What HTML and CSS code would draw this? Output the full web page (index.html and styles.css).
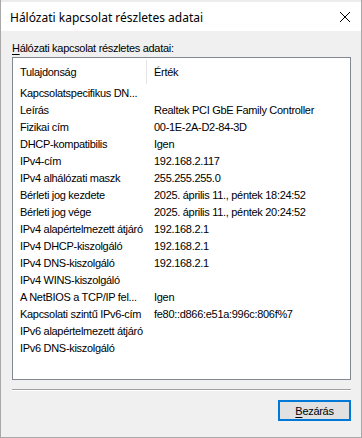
FILE: index.html
```html
<!DOCTYPE html>
<html lang="hu">
<head>
    <meta charset="UTF-8">
    <title>Hálózati kapcsolat részletes adatai</title>
    <link rel="stylesheet" href="styles.css">
</head>
<body>
    <div class="window">
        <div class="titlebar">
            <span class="title">Hálózati kapcsolat részletes adatai</span>
            <svg class="close" width="12" height="12" viewBox="0 0 12 12">
                <path d="M1 1 L11 11 M11 1 L1 11" stroke="#000" stroke-width="1" fill="none"/>
            </svg>
        </div>

        <div class="content">
            <div class="caption"><u>H</u>álózati kapcsolat részletes adatai:</div>

            <div class="listbox">
                <div class="head">
                    <div class="col1">Tulajdonság</div>
                    <div class="col2">Érték</div>
                </div>
                <div class="rows">
                    <div class="row"><div class="col1">Kapcsolatspecifikus DN...</div><div class="col2"></div></div>
                    <div class="row"><div class="col1">Leírás</div><div class="col2">Realtek PCI GbE Family Controller</div></div>
                    <div class="row"><div class="col1">Fizikai cím</div><div class="col2">00-1E-2A-D2-84-3D</div></div>
                    <div class="row"><div class="col1">DHCP-kompatibilis</div><div class="col2">Igen</div></div>
                    <div class="row"><div class="col1">IPv4-cím</div><div class="col2">192.168.2.117</div></div>
                    <div class="row"><div class="col1">IPv4 alhálózati maszk</div><div class="col2">255.255.255.0</div></div>
                    <div class="row"><div class="col1">Bérleti jog kezdete</div><div class="col2">2025. április 11., péntek 18:24:52</div></div>
                    <div class="row"><div class="col1">Bérleti jog vége</div><div class="col2">2025. április 11., péntek 20:24:52</div></div>
                    <div class="row"><div class="col1">IPv4 alapértelmezett átjáró</div><div class="col2">192.168.2.1</div></div>
                    <div class="row"><div class="col1">IPv4 DHCP-kiszolgáló</div><div class="col2">192.168.2.1</div></div>
                    <div class="row"><div class="col1">IPv4 DNS-kiszolgáló</div><div class="col2">192.168.2.1</div></div>
                    <div class="row"><div class="col1">IPv4 WINS-kiszolgáló</div><div class="col2"></div></div>
                    <div class="row"><div class="col1">A NetBIOS a TCP/IP fel...</div><div class="col2">Igen</div></div>
                    <div class="row"><div class="col1">Kapcsolati szintű IPv6-cím</div><div class="col2">fe80::d866:e51a:996c:806f%7</div></div>
                    <div class="row"><div class="col1">IPv6 alapértelmezett átjáró</div><div class="col2"></div></div>
                    <div class="row"><div class="col1">IPv6 DNS-kiszolgáló</div><div class="col2"></div></div>
                </div>
            </div>

            <div class="separator"></div>

            <div class="buttons">
                <button class="btn"><u>B</u>ezárás</button>
            </div>
        </div>
    </div>
</body>
</html>
```

FILE: styles.css
```css
body {
    margin: 0;
    background-color: #d9d9d9;
    font-family: "Liberation Sans", Arial, sans-serif;
    font-size: 11px;
    letter-spacing: -0.3px;
    color: #000;
}
.window {
    width: 362px;
    height: 438px;
    box-sizing: border-box;
    border: 1px solid #a8a8a8;
    border-top: none;
    background-color: #f0f0f0;
    overflow: hidden;
}
.titlebar {
    height: 31px;
    background-color: #fff;
    display: flex;
    align-items: center;
    justify-content: space-between;
    padding: 1px 10px 0 9px;
    box-sizing: border-box;
    border-top: 2px solid #ececec;
}
.title {
    font-family: "Noto Sans", "Open Sans", sans-serif;
    font-size: 12px;
    letter-spacing: 0;
    color: #000;
}
.content {
    padding: 9px 10px 0 11px;
}
.caption {
    height: 17px;
    line-height: 17px;
    color: #000;
}
.caption u, .btn u {
    text-decoration-thickness: 1px;
    text-underline-offset: 2px;
}
.listbox {
    height: 323px;
    box-sizing: border-box;
    border: 1px solid #828790;
    background-color: #fff;
}
.head {
    display: flex;
    height: 26px;
    align-items: center;
    padding-top: 1px;
    box-sizing: border-box;
}
.head .col1 {
    border-right: 1px solid #e5e5e5;
    height: 24px;
    line-height: 24px;
}
.rows {
    padding-top: 1px;
}
.row {
    display: flex;
    height: 17px;
    line-height: 17px;
}
.col1 {
    width: 134px;
    flex-shrink: 0;
    padding-left: 7px;
    box-sizing: border-box;
    white-space: nowrap;
    overflow: hidden;
}
.col2 {
    padding-left: 7px;
    white-space: nowrap;
}
.separator {
    margin-top: 9px;
    height: 1px;
    background-color: #a0a0a0;
    border-bottom: 1px solid #fff;
}
.buttons {
    display: flex;
    justify-content: flex-end;
    margin-top: 9px;
}
.btn {
    width: 73px;
    height: 21px;
    box-sizing: border-box;
    border: 2px solid #0078d7;
    background-color: #e1e1e1;
    font-family: "Liberation Sans", Arial, sans-serif;
    font-size: 11px;
    letter-spacing: -0.3px;
    color: #000;
    padding: 0;
}
```
